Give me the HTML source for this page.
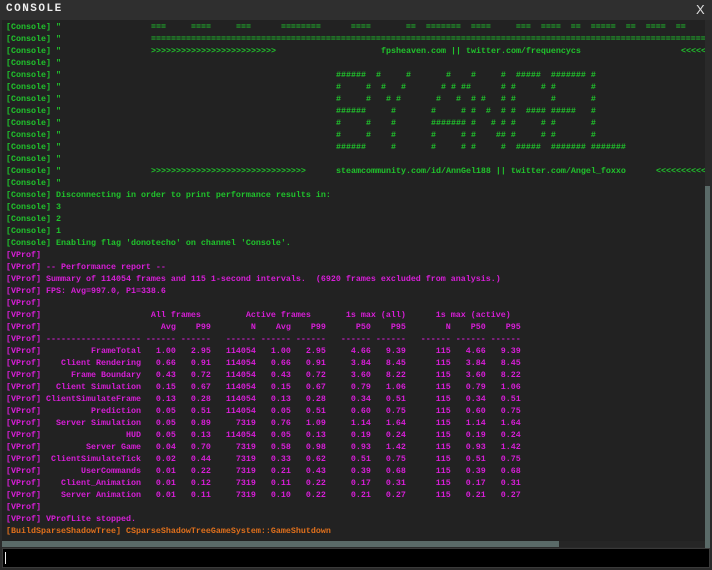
<!DOCTYPE html>
<html><head><meta charset="utf-8"><style>
*{margin:0;padding:0;box-sizing:border-box}
body{width:712px;height:570px;background:#2a2a2a;overflow:hidden;position:relative;font-family:"Liberation Mono",monospace}
#title{position:absolute;left:0;top:0;width:712px;height:20px;background:#2f2f2f}
#title .t{position:absolute;left:6px;top:3px;color:#eee;font:bold 11px "Liberation Mono",monospace;letter-spacing:1.5px}
#title .x{position:absolute;left:696px;top:2px;color:#ddd;font:13px "Liberation Sans",sans-serif}
#con{position:absolute;left:2px;top:20px;width:703px;height:521px;background:#222;overflow:hidden}
.l{position:absolute;left:0;height:12px;white-space:pre;font-size:8.333px;line-height:12px;font-weight:bold}
.l span{position:absolute;top:0}
.g{color:#20c42c}.m{color:#d81ed8}.o{color:#e0701c}
#vs{position:absolute;left:705px;top:186px;width:5px;height:362px;background:#5a6a68}
#vtrack{position:absolute;left:705px;top:20px;width:7px;height:528px;background:#2a2a2a}
#hs{position:absolute;left:2px;top:541px;width:557px;height:6px;background:#5a6a68}
#htrack{position:absolute;left:2px;top:541px;width:703px;height:6px;background:#262626}
#inp{position:absolute;left:2px;top:548px;width:708px;height:20px;background:#000;border:1px solid #3a3a3a}
#cur{position:absolute;left:5px;top:552px;width:1px;height:12px;background:#eee}
</style></head><body>
<div id="title"><div class="t">CONSOLE</div><div class="x">X</div></div>
<div id="vtrack"></div>
<div id="con">
<div class="l g" style="top:1px"><span style="left:4px">[Console] "</span><span style="left:149px">===     ====     ===      ========      ====       ==  =======  ====     ===  ====  ==  =====  ==  ====  ==</span></div>
<div class="l g" style="top:13px"><span style="left:4px">[Console] "</span><span style="left:149px">=====================================================================================================================</span></div>
<div class="l g" style="top:25px"><span style="left:4px">[Console] "</span><span style="left:149px">&gt;&gt;&gt;&gt;&gt;&gt;&gt;&gt;&gt;&gt;&gt;&gt;&gt;&gt;&gt;&gt;&gt;&gt;&gt;&gt;&gt;&gt;&gt;&gt;&gt;</span><span style="left:379px">fpsheaven.com || twitter.com/frequencycs</span><span style="left:679px">&lt;&lt;&lt;&lt;&lt;&lt;</span></div>
<div class="l g" style="top:37px"><span style="left:4px">[Console] "</span></div>
<div class="l g" style="top:49px"><span style="left:4px">[Console] "</span><span style="left:334px">######  #     #       #    #     #  #####  ####### #</span></div>
<div class="l g" style="top:61px"><span style="left:4px">[Console] "</span><span style="left:334px">#     #  #   #       # # ##      # #     # #       #</span></div>
<div class="l g" style="top:73px"><span style="left:4px">[Console] "</span><span style="left:334px">#     #   # #       #   #  # #   # #       #       #</span></div>
<div class="l g" style="top:85px"><span style="left:4px">[Console] "</span><span style="left:334px">######     #       #     # #  #  # #  #### #####   #</span></div>
<div class="l g" style="top:97px"><span style="left:4px">[Console] "</span><span style="left:334px">#     #    #       ####### #   # # #     # #       #</span></div>
<div class="l g" style="top:109px"><span style="left:4px">[Console] "</span><span style="left:334px">#     #    #       #     # #    ## #     # #       #</span></div>
<div class="l g" style="top:121px"><span style="left:4px">[Console] "</span><span style="left:334px">######     #       #     # #     #  #####  ####### #######</span></div>
<div class="l g" style="top:133px"><span style="left:4px">[Console] "</span></div>
<div class="l g" style="top:145px"><span style="left:4px">[Console] "</span><span style="left:149px">&gt;&gt;&gt;&gt;&gt;&gt;&gt;&gt;&gt;&gt;&gt;&gt;&gt;&gt;&gt;&gt;&gt;&gt;&gt;&gt;&gt;&gt;&gt;&gt;&gt;&gt;&gt;&gt;&gt;&gt;&gt;</span><span style="left:334px">steamcommunity.com/id/AnnGel188 || twitter.com/Angel_foxxo</span><span style="left:654px">&lt;&lt;&lt;&lt;&lt;&lt;&lt;&lt;&lt;&lt;&lt;</span></div>
<div class="l g" style="top:157px"><span style="left:4px">[Console] "</span></div>
<div class="l g" style="top:169px"><span style="left:4px">[Console] Disconnecting in order to print performance results in:</span></div>
<div class="l g" style="top:181px"><span style="left:4px">[Console] 3</span></div>
<div class="l g" style="top:193px"><span style="left:4px">[Console] 2</span></div>
<div class="l g" style="top:205px"><span style="left:4px">[Console] 1</span></div>
<div class="l g" style="top:217px"><span style="left:4px">[Console] Enabling flag 'donotecho' on channel 'Console'.</span></div>
<div class="l m" style="top:229px"><span style="left:4px">[VProf]</span></div>
<div class="l m" style="top:241px"><span style="left:4px">[VProf] -- Performance report --</span></div>
<div class="l m" style="top:253px"><span style="left:4px">[VProf] Summary of 114054 frames and 115 1-second intervals.  (6920 frames excluded from analysis.)</span></div>
<div class="l m" style="top:265px"><span style="left:4px">[VProf] FPS: Avg=997.0, P1=338.6</span></div>
<div class="l m" style="top:277px"><span style="left:4px">[VProf]</span></div>
<div class="l m" style="top:289px"><span style="left:4px">[VProf]                      All frames         Active frames       1s max (all)      1s max (active)</span></div>
<div class="l m" style="top:301px"><span style="left:4px">[VProf]                        Avg    P99        N    Avg    P99      P50    P95        N    P50    P95</span></div>
<div class="l m" style="top:313px"><span style="left:4px">[VProf] ------------------- ------ ------   ------ ------ ------   ------ ------   ------ ------ ------</span></div>
<div class="l m" style="top:325px"><span style="left:4px">[VProf]          FrameTotal   1.00   2.95   114054   1.00   2.95     4.66   9.39      115   4.66   9.39</span></div>
<div class="l m" style="top:337px"><span style="left:4px">[VProf]    Client Rendering   0.66   0.91   114054   0.66   0.91     3.84   8.45      115   3.84   8.45</span></div>
<div class="l m" style="top:349px"><span style="left:4px">[VProf]      Frame Boundary   0.43   0.72   114054   0.43   0.72     3.60   8.22      115   3.60   8.22</span></div>
<div class="l m" style="top:361px"><span style="left:4px">[VProf]   Client Simulation   0.15   0.67   114054   0.15   0.67     0.79   1.06      115   0.79   1.06</span></div>
<div class="l m" style="top:373px"><span style="left:4px">[VProf] ClientSimulateFrame   0.13   0.28   114054   0.13   0.28     0.34   0.51      115   0.34   0.51</span></div>
<div class="l m" style="top:385px"><span style="left:4px">[VProf]          Prediction   0.05   0.51   114054   0.05   0.51     0.60   0.75      115   0.60   0.75</span></div>
<div class="l m" style="top:397px"><span style="left:4px">[VProf]   Server Simulation   0.05   0.89     7319   0.76   1.09     1.14   1.64      115   1.14   1.64</span></div>
<div class="l m" style="top:409px"><span style="left:4px">[VProf]                 HUD   0.05   0.13   114054   0.05   0.13     0.19   0.24      115   0.19   0.24</span></div>
<div class="l m" style="top:421px"><span style="left:4px">[VProf]         Server Game   0.04   0.70     7319   0.58   0.98     0.93   1.42      115   0.93   1.42</span></div>
<div class="l m" style="top:433px"><span style="left:4px">[VProf]  ClientSimulateTick   0.02   0.44     7319   0.33   0.62     0.51   0.75      115   0.51   0.75</span></div>
<div class="l m" style="top:445px"><span style="left:4px">[VProf]        UserCommands   0.01   0.22     7319   0.21   0.43     0.39   0.68      115   0.39   0.68</span></div>
<div class="l m" style="top:457px"><span style="left:4px">[VProf]    Client_Animation   0.01   0.12     7319   0.11   0.22     0.17   0.31      115   0.17   0.31</span></div>
<div class="l m" style="top:469px"><span style="left:4px">[VProf]    Server Animation   0.01   0.11     7319   0.10   0.22     0.21   0.27      115   0.21   0.27</span></div>
<div class="l m" style="top:481px"><span style="left:4px">[VProf]</span></div>
<div class="l m" style="top:493px"><span style="left:4px">[VProf] VProfLite stopped.</span></div>
<div class="l o" style="top:505px"><span style="left:4px">[BuildSparseShadowTree] CSparseShadowTreeGameSystem::GameShutdown</span></div>
</div>
<div id="vs"></div>
<div id="htrack"></div>
<div id="hs"></div>
<div id="inp"></div>
<div id="cur"></div>
</body></html>
